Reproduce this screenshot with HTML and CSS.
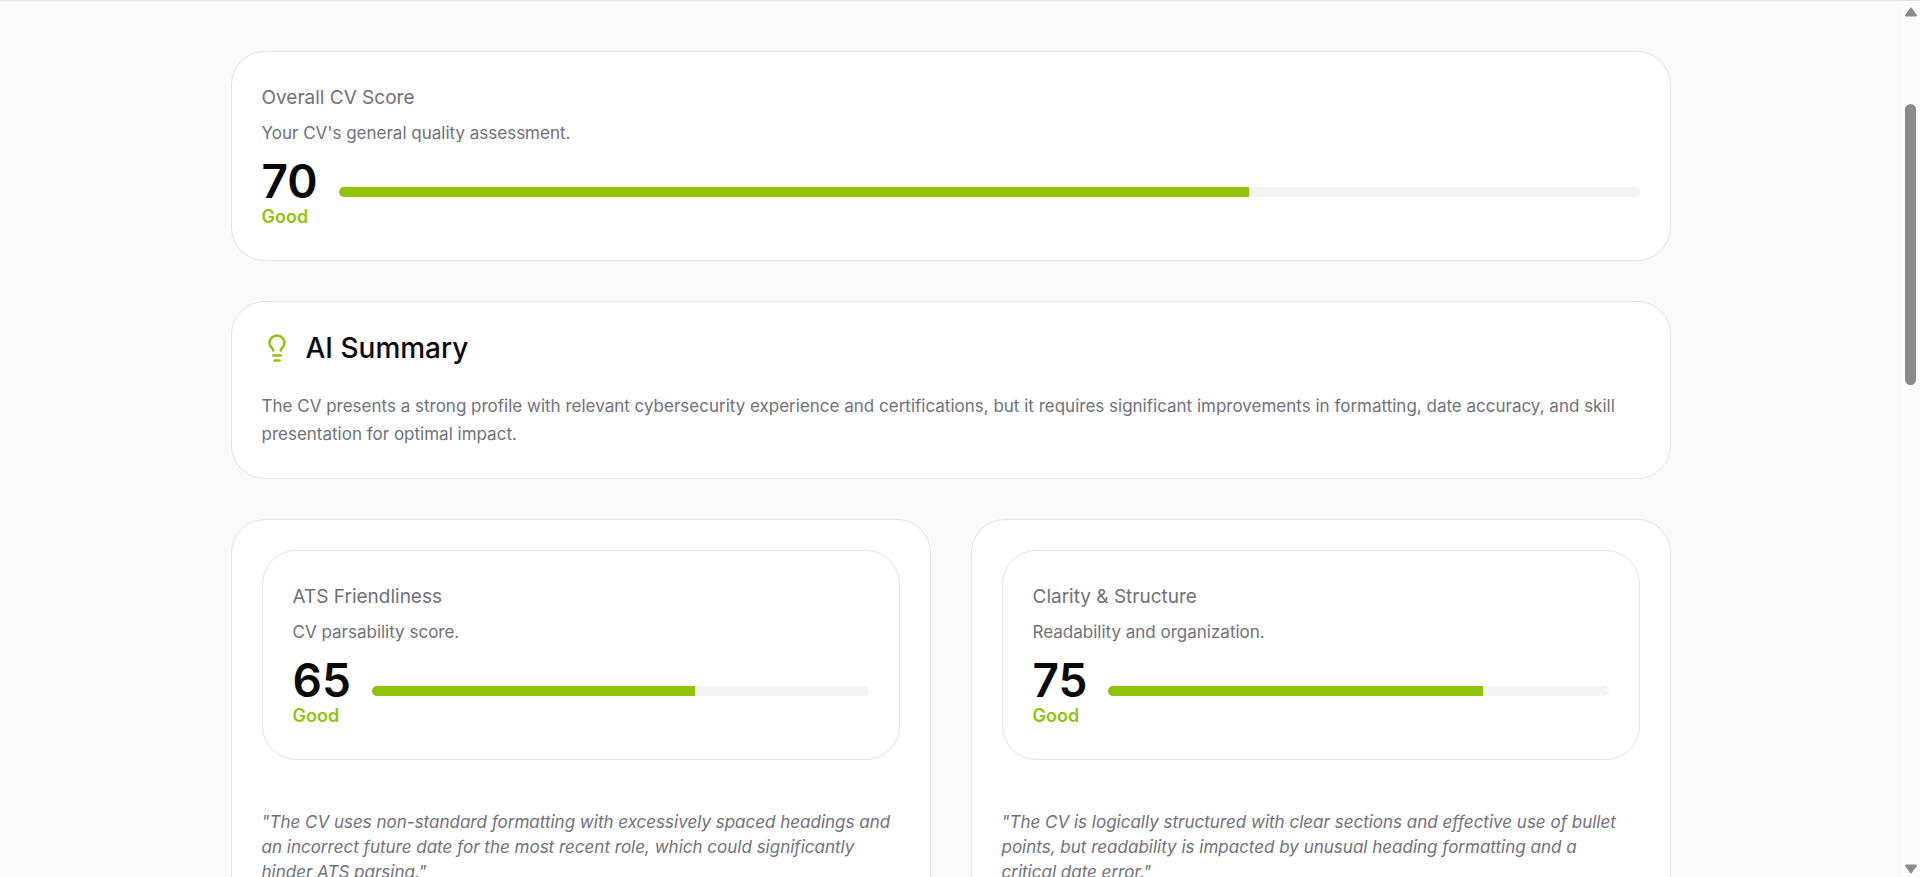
FILE: index.html
```html
<!DOCTYPE html>
<html lang="en">
<head>
    <meta charset="UTF-8">
    <meta name="viewport" content="width=device-width, initial-scale=1.0">
    <title>CV Analysis Results</title>
    <link rel="stylesheet" href="styles.css">
</head>
<body>
    <main class="results">
        <div class="container">
            <section class="card">
                <h3 class="score-title">Overall CV Score</h3>
                <p class="score-description">Your CV's general quality assessment.</p>
                <div class="score-row">
                    <div>
                        <div class="score-value">70</div>
                        <div class="score-label">Good</div>
                    </div>
                    <div class="progress" role="progressbar" aria-label="Overall CV Score" aria-valuenow="70" aria-valuemin="0" aria-valuemax="100">
                        <div class="progress-fill" style="width: 70%"></div>
                    </div>
                </div>
            </section>

            <section class="card">
                <div class="summary-header">
                    <svg class="summary-icon" viewBox="0 0 24 24" fill="none" stroke="currentColor" stroke-width="2" stroke-linecap="round" stroke-linejoin="round" aria-hidden="true">
                        <path d="M15 14c.2-1 .7-1.700 1.500-2.500 1-.9 1.500-2.200 1.500-3.500A6 6 0 0 0 6 8c0 1 .2 2.200 1.500 3.500.7.7 1.300 1.500 1.500 2.500"/>
                        <path d="M9 18h6"/>
                        <path d="M10 22h4"/>
                    </svg>
                    <h2>AI Summary</h2>
                </div>
                <p class="summary-text">The CV presents a strong profile with relevant cybersecurity experience and certifications, but it requires significant improvements in formatting, date accuracy, and skill presentation for optimal impact.</p>
            </section>

            <div class="score-grid">
                <section class="card">
                    <div class="card">
                        <h3 class="score-title">ATS Friendliness</h3>
                        <p class="score-description">CV parsability score.</p>
                        <div class="score-row">
                            <div>
                                <div class="score-value">65</div>
                                <div class="score-label">Good</div>
                            </div>
                            <div class="progress" role="progressbar" aria-label="ATS Friendliness" aria-valuenow="65" aria-valuemin="0" aria-valuemax="100">
                                <div class="progress-fill" style="width: 65%"></div>
                            </div>
                        </div>
                    </div>
                    <p class="quote">"The CV uses non-standard formatting with excessively spaced headings and an incorrect future date for the most recent role, which could significantly hinder ATS parsing."</p>
                </section>

                <section class="card">
                    <div class="card">
                        <h3 class="score-title">Clarity &amp; Structure</h3>
                        <p class="score-description">Readability and organization.</p>
                        <div class="score-row">
                            <div>
                                <div class="score-value">75</div>
                                <div class="score-label">Good</div>
                            </div>
                            <div class="progress" role="progressbar" aria-label="Clarity and Structure" aria-valuenow="75" aria-valuemin="0" aria-valuemax="100">
                                <div class="progress-fill" style="width: 75%"></div>
                            </div>
                        </div>
                    </div>
                    <p class="quote">"The CV is logically structured with clear sections and effective use of bullet points, but readability is impacted by unusual heading formatting and a critical date error."</p>
                </section>
            </div>
        </div>
    </main>

    <div class="scrollbar" aria-hidden="true">
        <svg class="scroll-arrow" viewBox="0 0 14 10"><path d="M7 1.500 12 8.500H2Z"/></svg>
        <div class="scroll-track">
            <div class="scroll-thumb"></div>
        </div>
        <svg class="scroll-arrow" viewBox="0 0 14 10"><path d="M7 8.500 2 1.500H12Z"/></svg>
    </div>
</body>
</html>
```
FILE: styles.css
```css
:root {
    --good: #90c40a;
    --text: #09090b;
    --text-secondary: #71717a;
    --background: #fafafa;
    --border: #e4e4e6;
    --track: #f3f3f3;
    --scrollbar: #8b8b8b;
    --radius: 34px;
}

* {
    box-sizing: border-box;
    margin: 0;
    padding: 0;
}

body {
    display: flex;
    height: 100vh;
    overflow: hidden;
    border-top: 1px solid var(--border);
    background-color: var(--background);
    color: var(--text);
    font-family: Inter, "Open Sans", sans-serif;
    font-size: 17px;
    line-height: 28px;
}

.results {
    flex: 1;
    min-width: 0;
    padding: 50px 20px;
}

.container {
    display: flex;
    flex-direction: column;
    gap: 40px;
    max-width: 1440px;
    margin: 0 auto;
}

.card {
    padding: 30px;
    background-color: #fff;
    border: 1px solid var(--border);
    border-radius: var(--radius);
}

.score-title {
    margin-bottom: 5px;
    color: var(--text-secondary);
    font-size: 19px;
    font-weight: 400;
    line-height: 32px;
}

.score-description {
    margin-bottom: 11px;
    color: var(--text-secondary);
}

.score-row {
    display: flex;
    align-items: center;
    gap: 21px;
}

.score-value {
    font-size: 46px;
    font-weight: 600;
    line-height: 46px;
}

.score-label {
    color: var(--good);
    font-size: 18px;
    font-weight: 600;
    line-height: 26px;
}

.progress {
    flex: 1;
    height: 10px;
    margin-bottom: 4px;
    overflow: hidden;
    background-color: var(--track);
    border-radius: 5px;
}

.progress-fill {
    height: 100%;
    background-color: var(--good);
}

.summary-header {
    display: flex;
    align-items: center;
    gap: 14px;
    margin-bottom: 28px;
}

.summary-header h2 {
    font-size: 28px;
    font-weight: 500;
    line-height: 32px;
}

.summary-icon {
    width: 30px;
    height: 30px;
    color: var(--good);
}

.summary-text {
    color: var(--text-secondary);
}

.score-grid {
    display: grid;
    grid-template-columns: 1fr 1fr;
    gap: 40px;
}

.quote {
    margin-top: 50px;
    padding-right: 8px;
    color: var(--text-secondary);
    font-style: italic;
    line-height: 25px;
}

/* Scrollbar */
.scrollbar {
    display: flex;
    flex-direction: column;
    align-items: center;
    width: 19px;
    padding: 6px 0 3px;
    background-color: #fcfcfc;
}

.scroll-arrow {
    width: 14px;
    height: 10px;
    fill: var(--scrollbar);
    stroke: var(--scrollbar);
    stroke-width: 2;
    stroke-linejoin: round;
}

.scroll-track {
    display: grid;
    flex: 1;
    grid-template-rows: 87fr 281fr 479fr;
}

.scroll-thumb {
    grid-row: 2;
    width: 11px;
    background-color: var(--scrollbar);
    border-radius: 6px;
}

@media (max-width: 900px) {
    .score-grid {
        grid-template-columns: 1fr;
    }
}
```
